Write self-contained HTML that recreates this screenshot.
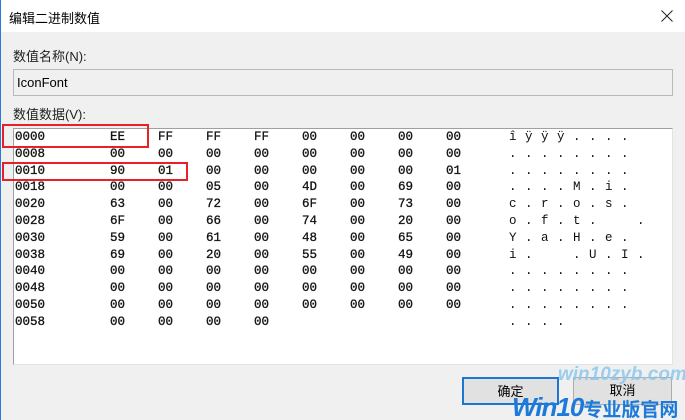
<!DOCTYPE html>
<html><head><meta charset="utf-8"><style>
*{margin:0;padding:0;box-sizing:border-box}
html{width:685px;height:420px;overflow:hidden}
body{width:685px;height:420px;overflow:hidden;background:#f0f0f0;font-family:"Liberation Sans","Microsoft YaHei","Noto Sans CJK SC",sans-serif;font-size:13px;color:#000;position:relative}
.title{position:absolute;left:0;top:0;width:685px;height:32px;background:#fff;border-left:1px solid #2b79d8}
.title span{position:absolute;left:8px;top:8px;font-size:13px}
.edge{position:absolute;left:0;top:32px;width:1px;height:388px;background:#2b79d8}
.lbl{position:absolute;left:13px;font-size:13px;color:#222}
.name{position:absolute;left:13px;top:69px;width:660px;height:27px;border:1px solid #b9b9b9;background:#f0f0f0}
.name span{position:absolute;left:3px;top:5px;font-size:13px}
.data{position:absolute;left:13px;top:128px;width:660px;height:237px;background:#fff;border-top:1px solid #a0a0a0;border-left:1px solid #a0a0a0;border-right:1px solid #e3e3e3;border-bottom:1px solid #e3e3e3}
.t{position:absolute;font-family:"Liberation Mono",monospace;font-size:12.5px;color:#111;line-height:14px;-webkit-text-stroke:0.3px #111}
.red{position:absolute;border:2px solid #e8202a}
.btn{position:absolute;top:377px;height:28px;border:1px solid #adadad;background:#e1e1e1;text-align:center;line-height:26px;font-size:13px}
.wm{position:absolute;font-family:"Liberation Sans",sans-serif;font-weight:bold;font-style:italic;color:#1d7ad8;white-space:nowrap}
</style></head><body>
<div class="title"><span>编辑二进制数值</span>
<svg style="position:absolute;left:660px;top:10px" width="12" height="12"><path d="M0.5 0.5L11.5 11.5M11.5 0.5L0.5 11.5" stroke="#222" stroke-width="1"/></svg></div>
<div class="edge"></div>
<div class="lbl" style="top:46px">数值名称(N):</div>
<div class="name"><span>IconFont</span></div>
<div class="lbl" style="top:104px">数值数据(V):</div>
<div class="data"></div>
<div id="rows"></div>
<div class="red" style="left:2px;top:124px;width:147px;height:24px"></div>
<div class="red" style="left:2px;top:162px;width:186px;height:19px"></div>
<div class="btn" style="left:462px;width:97px;border:2px solid #1b76d4">确定</div>
<div class="btn" style="left:573px;width:99px">取消</div>
<div class="wm" style="left:558px;top:364px;font-size:19px;color:#8cc7ee;opacity:.85">win10zyb.com</div>
<div class="wm" style="left:512px;top:392px;font-size:26px;letter-spacing:-1px">Win10<span style="font-style:normal;font-size:19px;font-family:'Noto Sans CJK SC',sans-serif;letter-spacing:0">专业版官网</span></div>
<script>
var d=[["0000","EE FF FF FF 00 00 00 00","î ÿ ÿ ÿ . . . ."],
["0008","00 00 00 00 00 00 00 00",". . . . . . . ."],
["0010","90 01 00 00 00 00 00 01",". . . . . . . ."],
["0018","00 00 05 00 4D 00 69 00",". . . . M . i ."],
["0020","63 00 72 00 6F 00 73 00","c . r . o . s ."],
["0028","6F 00 66 00 74 00 20 00","o . f . t .   ."],
["0030","59 00 61 00 48 00 65 00","Y . a . H . e ."],
["0038","69 00 20 00 55 00 49 00","i .   . U . I ."],
["0040","00 00 00 00 00 00 00 00",". . . . . . . ."],
["0048","00 00 00 00 00 00 00 00",". . . . . . . ."],
["0050","00 00 00 00 00 00 00 00",". . . . . . . ."],
["0058","00 00 00 00",". . . ."]];
var h="";
d.forEach(function(r,i){var y=130+i*16.8;
h+='<div class="t" style="left:15px;top:'+y+'px">'+r[0]+'</div>';
r[1].split(" ").forEach(function(b,j){h+='<div class="t" style="left:'+(110+j*48)+'px;top:'+y+'px">'+b+'</div>'});
r[2].split(" ").forEach(function(c,j){h+='<div class="t" style="left:'+(509+j*16)+'px;top:'+y+'px;-webkit-text-stroke:0">'+c+'</div>'});
});
document.getElementById("rows").innerHTML=h;
</script>
</body></html>
